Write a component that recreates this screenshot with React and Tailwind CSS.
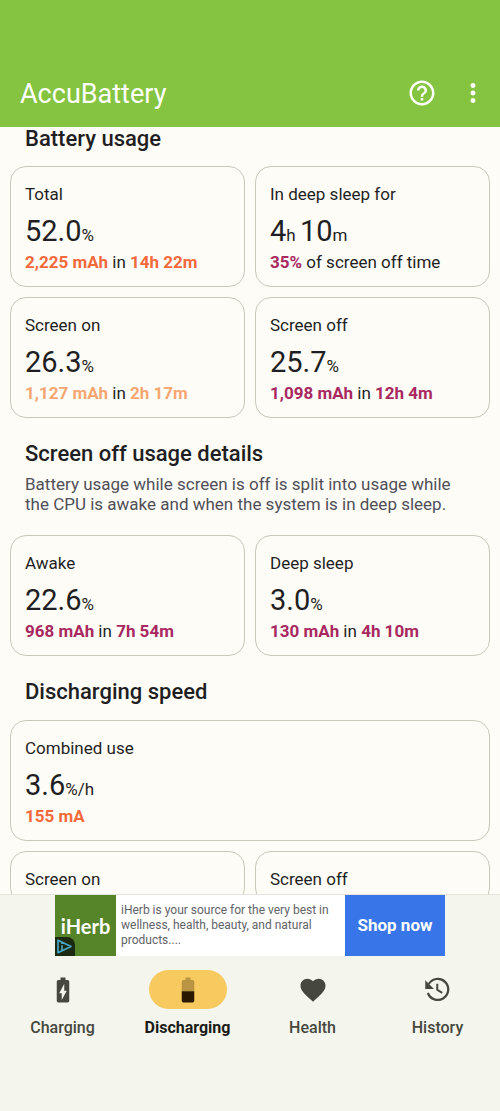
import React from 'react';
import clsx from 'clsx';
import { MdBatteryChargingFull, MdFavorite, MdHelpOutline, MdMoreVert } from 'react-icons/md';

const toneClasses = {
  orange: 'text-[#f4693b]',
  peach: 'text-[#f7a672]',
  plum: 'text-[#a8285f]',
};

const usageCards = [
  {
    label: 'Total',
    value: [['52.0', '%']],
    tone: 'orange',
    detail: ['2,225 mAh', ' in ', '14h 22m'],
  },
  {
    label: 'In deep sleep for',
    value: [['4', 'h '], ['10', 'm']],
    tone: 'plum',
    detail: ['35%', ' of screen off time'],
  },
  {
    label: 'Screen on',
    value: [['26.3', '%']],
    tone: 'peach',
    detail: ['1,127 mAh', ' in ', '2h 17m'],
  },
  {
    label: 'Screen off',
    value: [['25.7', '%']],
    tone: 'plum',
    detail: ['1,098 mAh', ' in ', '12h 4m'],
  },
];

const screenOffCards = [
  {
    label: 'Awake',
    value: [['22.6', '%']],
    tone: 'plum',
    detail: ['968 mAh', ' in ', '7h 54m'],
  },
  {
    label: 'Deep sleep',
    value: [['3.0', '%']],
    tone: 'plum',
    detail: ['130 mAh', ' in ', '4h 10m'],
  },
];

const speedCards = [
  {
    label: 'Combined use',
    value: [['3.6', '%/h']],
    tone: 'orange',
    detail: ['155 mA'],
    wide: true,
  },
  { label: 'Screen on' },
  { label: 'Screen off' },
];

const HalfBatteryIcon = () => (
  <svg viewBox="0 0 24 24" className="size-[30px]" fill="currentColor" aria-hidden="true">
    <path
      fillOpacity=".3"
      d="M17 5.33C17 4.6 16.4 4 15.67 4H14V2h-4v2H8.33C7.6 4 7 4.6 7 5.33V13h10V5.33z"
    />
    <path d="M7 13v7.67C7 21.4 7.6 22 8.33 22h7.33c.74 0 1.34-.6 1.34-1.33V13H7z" />
  </svg>
);

const HistoryIcon = () => (
  <svg viewBox="0 0 24 24" className="size-[30px]" fill="none" stroke="currentColor" aria-hidden="true">
    <path strokeWidth="1.8" d="M4.6 7.2A8.4 8.4 0 1 1 3.9 14.4" />
    <path strokeWidth="1.6" d="M11.4 7v4.8l4 2.5" />
    <path fill="currentColor" stroke="none" d="M1.8 4.2v7h7z" />
  </svg>
);

/* Outlined tile with a label, a large figure and a coloured detail line */
const StatCard = ({ label, value, tone, detail, wide }) => (
  <article
    className={clsx(
      'rounded-2xl border border-[#c7c9bb] px-3.5 pt-[17px] pb-3.5 text-[17px] leading-5',
      wide && 'col-span-2'
    )}
  >
    <h3>{label}</h3>
    {value && (
      <p className="mt-2 text-[29px] leading-[38px]">
        {value.map(([number, unit]) => (
          <React.Fragment key={unit}>
            {number}
            <span className="text-[17px] leading-5">{unit}</span>
          </React.Fragment>
        ))}
      </p>
    )}
    {detail && (
      <p className="mt-0.5">
        {detail.map((part, i) =>
          i % 2 === 0 ? (
            <strong key={part} className={clsx('font-bold', toneClasses[tone])}>
              {part}
            </strong>
          ) : (
            part
          )
        )}
      </p>
    )}
  </article>
);

const CardGrid = ({ cards }) => (
  <div className="grid grid-cols-2 gap-2.5">
    {cards.map((card) => (
      <StatCard key={card.label} {...card} />
    ))}
  </div>
);

const SectionTitle = ({ children }) => (
  <h2 className="px-[15px] text-[22px] leading-6 font-medium">{children}</h2>
);

const AdBanner = () => (
  <aside className="mx-auto flex h-[61px] w-full max-w-[390px] bg-white" aria-label="Advertisement">
    <div className="relative flex w-[61px] shrink-0 items-center justify-center bg-[#568428]">
      <span className="font-['Lato'] text-[20px] leading-6 font-bold text-white">iHerb</span>
      <svg viewBox="0 0 20 19" className="absolute bottom-0 left-0 h-[19px] w-5" aria-hidden="true">
        <path fill="#1c2a12" d="M0 0h12a8 8 0 0 1 8 8v11H0z" />
        <path
          fill="none"
          stroke="#45a9cc"
          strokeWidth="1.6"
          strokeLinejoin="round"
          d="M3 3.2v12.6L16 9.5zM7 8.2v5M7 5.8v1.2"
        />
      </svg>
    </div>
    <p className="flex-1 pt-2 pl-[5px] text-[12px] leading-[15px] text-[#5f6368]">
      iHerb is your source for the very best in wellness, health, beauty, and natural products....
    </p>
    <button type="button" className="w-[100px] shrink-0 bg-[#3875e9] text-[17px] font-bold text-white">
      Shop now
    </button>
  </aside>
);

const NavItem = ({ label, icon, active }) => (
  <a
    href={`#${label.toLowerCase()}`}
    aria-current={active ? 'page' : undefined}
    className={clsx(
      'flex flex-1 flex-col items-center gap-2.5 text-[16px] leading-[18px]',
      active ? 'font-bold text-[#1b1c18]' : 'font-medium text-[#46483f]'
    )}
  >
    <span
      className={clsx(
        'flex h-[39px] w-[78px] items-center justify-center rounded-full',
        active && 'bg-[#f7ca60] text-[#2a1800]'
      )}
    >
      {icon}
    </span>
    {label}
  </a>
);

const App = () => (
  <div className="flex h-screen flex-col bg-[#fefcf7] font-['Roboto',sans-serif] text-[#1f1f23]">
    <header className="flex shrink-0 items-center bg-[#85c440] pt-16 pr-3 pb-[5px] pl-5 text-white">
      <h1 className="flex-1 pt-[3px] text-[27px] leading-[55px]">AccuBattery</h1>
      <button type="button" aria-label="Help" className="mr-[21px]">
        <MdHelpOutline className="size-[30px]" />
      </button>
      <button type="button" aria-label="More options">
        <MdMoreVert className="size-[30px]" />
      </button>
    </header>

    <main className="min-h-0 flex-1 overflow-hidden px-2.5">
      <section className="flex flex-col gap-[15px]">
        <SectionTitle>Battery usage</SectionTitle>
        <CardGrid cards={usageCards} />
      </section>

      <section className="flex flex-col gap-[21px] pt-6">
        <div>
          <SectionTitle>Screen off usage details</SectionTitle>
          <p className="mt-2 px-[15px] text-[17px] leading-5 text-[#504f58]">
            Battery usage while screen is off is split into usage while the CPU is awake and when the
            system is in deep sleep.
          </p>
        </div>
        <CardGrid cards={screenOffCards} />
      </section>

      <section className="flex flex-col gap-4 pt-6">
        <SectionTitle>Discharging speed</SectionTitle>
        <CardGrid cards={speedCards} />
      </section>
    </main>

    <footer className="shrink-0 border-t border-[#e4e4dc] bg-[#f4f5ec]">
      <AdBanner />
      <nav className="flex pt-[14px] pb-[74px]" aria-label="Main">
        <NavItem label="Charging" icon={<MdBatteryChargingFull className="size-[30px]" />} />
        <NavItem label="Discharging" icon={<HalfBatteryIcon />} active />
        <NavItem label="Health" icon={<MdFavorite className="size-[30px]" />} />
        <NavItem label="History" icon={<HistoryIcon />} />
      </nav>
    </footer>
  </div>
);

export default App;
